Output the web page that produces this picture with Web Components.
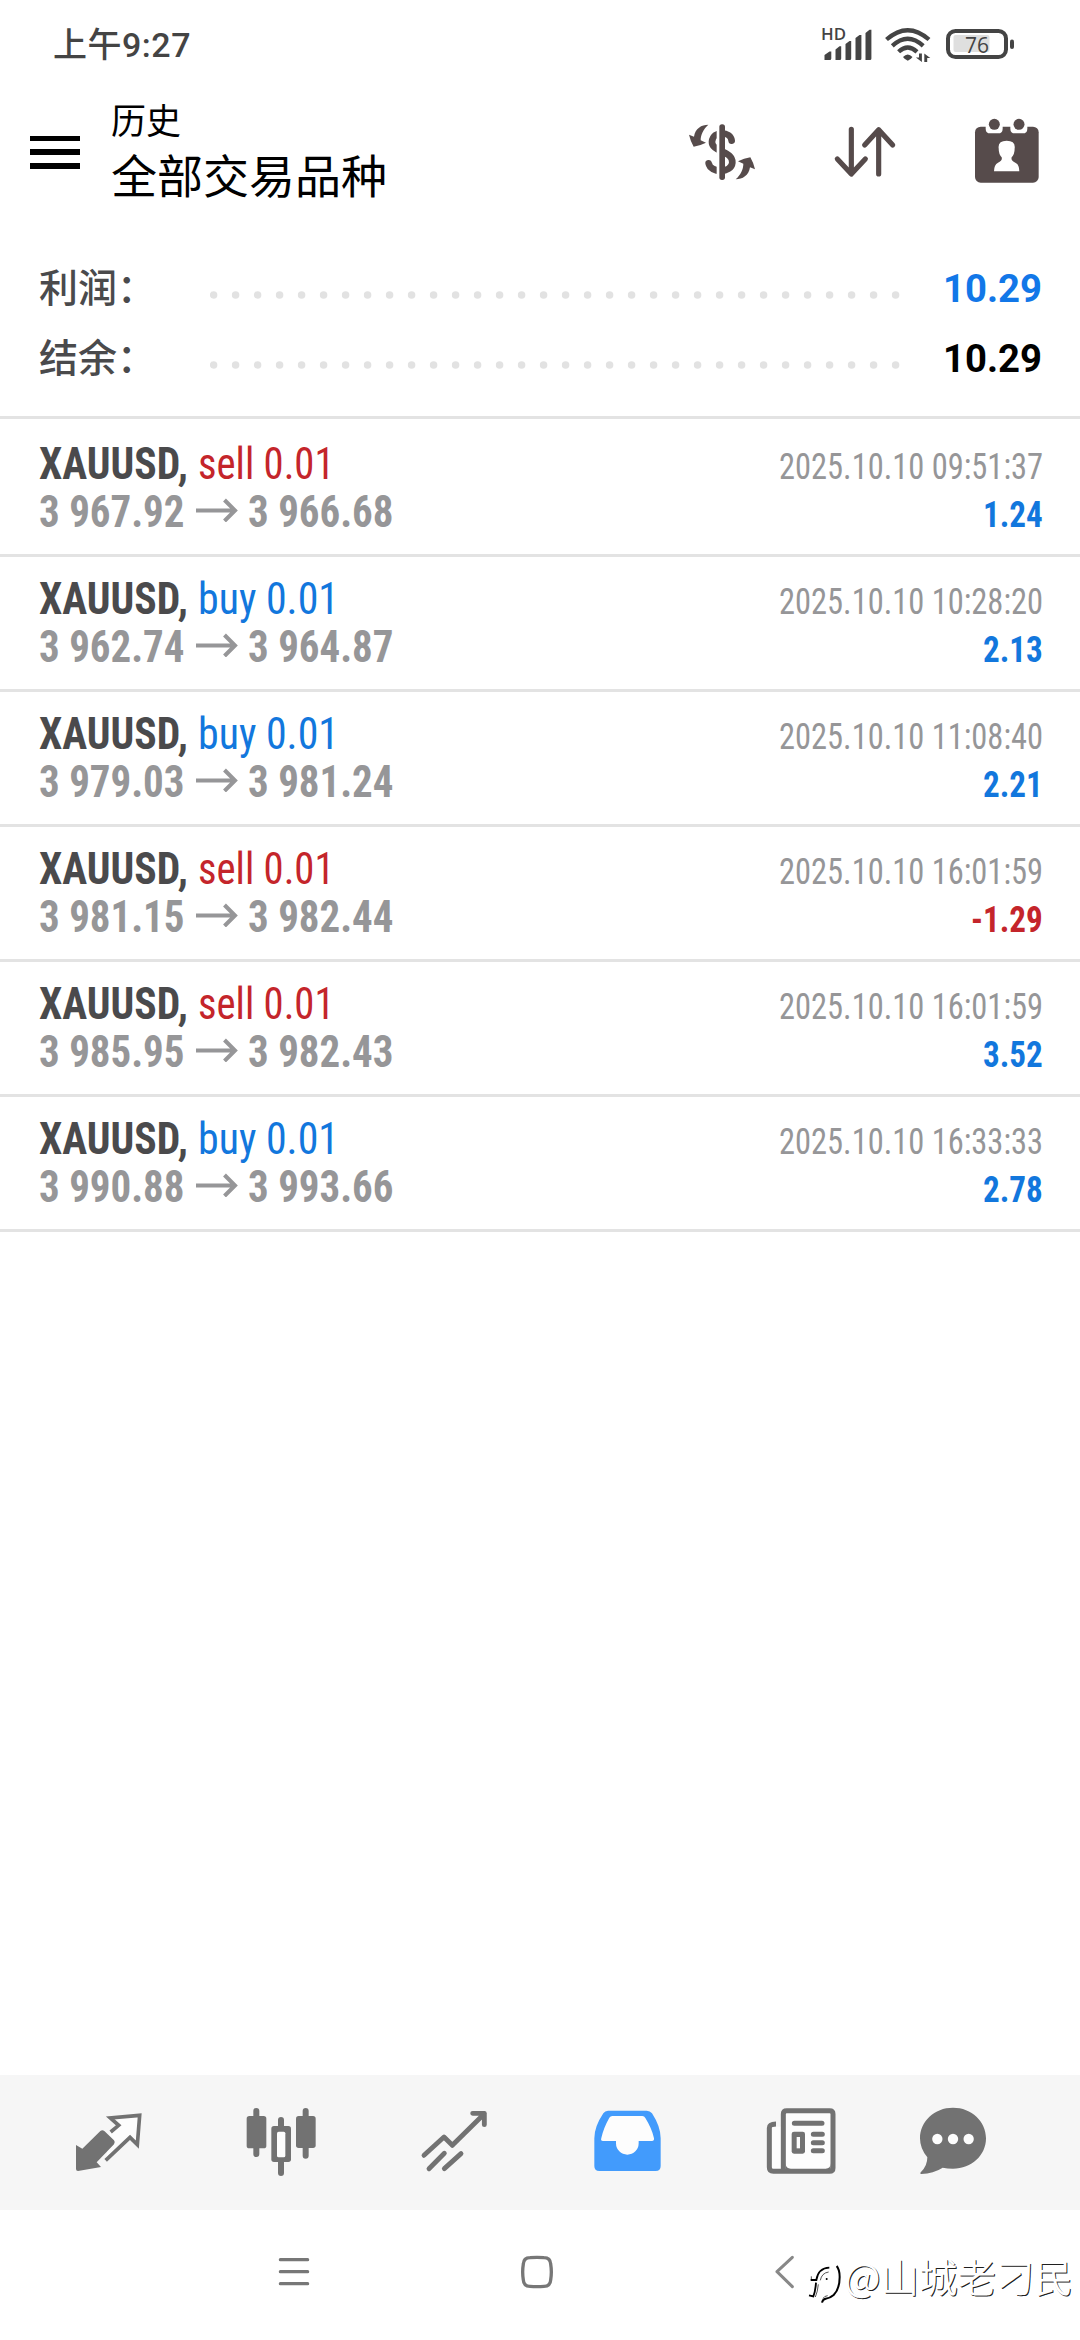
<!DOCTYPE html>
<html lang="zh-CN">
<head>
<meta charset="utf-8">
<title>历史</title>
<style>
body{margin:0;background:#fff}
</style>
</head>
<body>
<history-app></history-app>
<script>
const define=(name,html,after)=>{
  const tpl=document.createElement('template');
  tpl.innerHTML=html;
  customElements.define(name,class extends HTMLElement{
    connectedCallback(){
      if(this.shadowRoot)return;
      this.attachShadow({mode:'open'}).append(tpl.content.cloneNode(true));
      if(after)after.call(this,this.shadowRoot);
    }
  });
};

/* Fits its text to a given advance width: letter spacing to widen, condensing to narrow. */
define('fit-text',`<style>:host{display:inline-block;white-space:pre}span{display:inline-block;transform-origin:0 50%}</style><span><slot></slot></span>`,function(r){
  const s=r.querySelector('span'),n=[...this.textContent].length;
  const natural=s.getBoundingClientRect().width;
  const w=+this.getAttribute('w')||natural*this.getAttribute('ratio');
  if(w>natural)this.style.letterSpacing=(w-natural)/n+'px';
  else s.style.transform=`scaleX(${w/natural})`;
  this.style.width=w+'px';
});

define('status-bar',`<style>
:host{display:flex;justify-content:space-between;height:90px;box-sizing:border-box;padding:25px 64px 0 53px;color:#444}
.time{font:500 34px/40px Roboto,"Noto Sans CJK SC",sans-serif}
svg{margin-top:-25px;display:block}
</style>
<fit-text class="time" w="138">上午9:27</fit-text>
<svg width="200" height="90" viewBox="816 0 200 90" fill="#444">
<text x="821" y="40" font-family="Open Sans,sans-serif" font-weight="600" font-size="16.5" textLength="25" lengthAdjust="spacingAndGlyphs">HD</text>
<path d="M824.500 60v-5l5-3.500h1.800v7q0 1.500-1.500 1.500zM835.500 60v-10.500l4-3.200h1.700v12.200q0 1.500-1.500 1.500zM845.500 60v-16l4-3h1.700v17.500q0 1.500-1.500 1.500zM855.500 60v-22l4-3h1.900v23.500q0 1.500-1.500 1.500zM865.500 60v-27l4-3.300h1.900v28.800q0 1.500-1.500 1.500z"/>
<g fill="none" stroke="#444" stroke-width="4.300"><path d="M886.500 39.500Q907.700 20.800 929 39.500M892.300 45.800Q907.700 31.500 923.200 45.800M898.600 51.800Q907.700 43.200 917 51.800"/></g>
<path d="M903 57q4.700-5 9.500 0-.8 1.800-4.700 3.700-4-1.900-4.800-3.700zM919 53.500h2.900v8.500l-6-4.500h3.100zM924.300 62v-8.500l6 4.500h-3.100v4z"/>
<rect x="948" y="31" width="58" height="26" rx="7.500" fill="#fff" stroke="#444" stroke-width="4"/>
<rect x="953.500" y="35" width="36" height="17" rx="2" fill="#dfdfdf"/>
<text x="965" y="52.700" font-family="Open Sans,sans-serif" font-size="22" textLength="24" lengthAdjust="spacingAndGlyphs">76</text>
<rect x="1010" y="39.500" width="4" height="9.500" rx="2"/>
</svg>`);

define('app-header',`<style>
:host{display:flex;height:150px;box-sizing:border-box;padding-left:30px;color:#000}
.menu{display:flex;flex-direction:column;gap:8px;width:50px;padding-top:45.500px;margin-right:31px}
.menu i{height:5.700px;background:#000}
.titles{flex:1;font-family:"Noto Sans CJK SC",sans-serif;padding-top:9px}
.sub{font-size:35px;line-height:40px}
.title{font-size:46px;line-height:60px;margin-top:4px;white-space:nowrap}
svg{display:block}
</style>
<div class="menu"><i></i><i></i><i></i></div>
<div class="titles"><div class="sub">历史</div><div class="title">全部交易品种</div></div>
<svg width="400" height="100" viewBox="60 270 1200 300" fill="#564b4b">
<path d="M215 422C212 394 160 390 156 425C154 456 219 452 217 488C214 521 152 520 146 490" fill="none" stroke="#564b4b" stroke-width="20" stroke-linecap="round"/>
<rect x="170" y="374" width="17" height="165" fill="#fff"/>
<rect x="178" y="373" width="17" height="167" rx="8"/>
<path d="M145 374C124 374 106 385 102 410L87 404Q92 425 101 440Q120 437 138 428L122 421C122 404 130 388 145 374Z"/>
<path transform="rotate(180 186 456)" d="M145 374C124 374 106 385 102 410L87 404Q92 425 101 440Q120 437 138 428L122 421C122 404 130 388 145 374Z"/>
<path d="M574 388V520M532 477L574 522L616 477M656 522V391M614 435L656 389L698 435" fill="none" stroke="#564b4b" stroke-width="15.500" stroke-linecap="round" stroke-linejoin="round"/>
<rect x="945" y="380" width="191" height="168" rx="17"/>
<path d="M977 372h51v14q0 14-14 14h-23q-14 0-14-14zM1051 372h51v14q0 14-14 14h-23q-14 0-14-14z" fill="#fff"/>
<circle cx="1003" cy="373" r="16.500"/><circle cx="1077" cy="373" r="16.500"/>
<path fill="#fff" d="M1016 445Q1013 422 1040 422Q1067 422 1064 445Q1064 463 1055 472Q1052 482 1066 488Q1078 494 1078 514H1002Q1002 494 1014 488Q1028 482 1025 472Q1016 463 1016 445Z"/>
</svg>`);

define('summary-row',`<style>
:host{display:flex;align-items:center;height:70px;padding:0 38px 0 39px}
.label{font:500 39px/56px "Noto Sans CJK SC",sans-serif;color:#4a4a4c;width:171px;margin-top:-6px}
svg{display:block;margin-top:14px;flex:1}
.val{font:700 39px/56px Roboto,sans-serif;color:var(--value,#000);margin-top:2px}
</style>
<div class="label"><slot name="label"></slot></div>
<svg height="10" viewBox="210 0 733 10" preserveAspectRatio="xMinYMid meet"><path d="M213.600 5H897" stroke="#e2e2e2" stroke-width="7.500" stroke-linecap="round" stroke-dasharray="0 22"/></svg>
<fit-text class="val" w="99">10.29</fit-text>`);

define('trade-row',`<style>
:host{display:block;height:135px;box-sizing:border-box;border-bottom:3px solid #e3e3e3;padding:19px 37px 0 39px;font-family:"Roboto Condensed",Roboto,sans-serif}
.line{display:flex;justify-content:space-between;align-items:baseline;height:48px;font-size:43.500px;line-height:48px;white-space:nowrap}
.sym{font-weight:700;color:#4a4a4c;margin-right:10px}
.side{color:var(--side)}
.price{font-weight:700;color:#969698}
.arrow{margin:0 10px 0 11px;width:42px;height:24px;vertical-align:5px}
.date{font-size:36px;color:#969698}
.amount{font-size:36px;font-weight:700;color:var(--amount)}
</style>
<div class="line"><span><fit-text class="sym" w="149">XAUUSD,</fit-text><fit-text class="side"></fit-text></span><fit-text class="date" w="264"></fit-text></div>
<div class="line"><span><fit-text class="price" id="from" w="146"></fit-text><svg class="arrow" viewBox="0 0 42 24"><path d="M0 12.500H39M28.500 2L39 12.500L28.500 23" fill="none" stroke="#969698" stroke-width="4"/></svg><fit-text class="price" id="to" w="146"></fit-text></span><span class="amount"></span></div>`,function(r){
  const g=k=>this.getAttribute(k),q=s=>r.querySelector(s);
  const set=(s,text,attr,v)=>{const e=q(s),f=document.createElement('fit-text');f.className=e.className;f.setAttribute(attr,v);f.textContent=text;e.replaceWith(f)};
  const sell=g('side')==='sell';
  this.style.setProperty('--side',sell?'#c4252b':'#1277dd');
  this.style.setProperty('--amount',g('amount')[0]==='-'?'#c4252b':'#1277dd');
  set('.side',g('side')+' 0.01','w',sell?136.5:141);
  set('.date',g('date'),'w',264);
  set('#from',g('from'),'w',145.5);
  set('#to',g('to'),'w',145.5);
  set('.amount',g('amount'),'ratio',.92);
});

define('tab-bar',`<style>
:host{display:flex;height:135px;background:#f6f6f6;padding-left:22px;fill:#727272}
svg{display:block;width:173px;height:135px}
.s{fill:none;stroke:#727272;stroke-linecap:round;stroke-linejoin:round}
.w{fill:#fdfdfd}
</style>
<svg viewBox="66 45 519 405"><path class="w" d="M330 218L357 196L326 172L424 161L414 260L390 233L317 302Z"/><path class="s" style="stroke-linejoin:miter;stroke-linecap:butt" stroke-width="11" d="M332 216L356 196L331 174L419 166L412 254L390 232L317 301"/><path d="M228 255L247 266L301 213Q307 208 313 213L342 241Q347 247 342 253L290 307L303 321L234 333Q228 333 228 327Z"/></svg>
<svg viewBox="585 45 519 405"><path class="s" stroke-width="18" d="M769 153V282M917 153V287M843 180V339"/><rect x="740" y="168" width="59" height="97" rx="8"/><rect x="888" y="168" width="59" height="96" rx="8"/><rect x="814" y="198" width="59" height="108" rx="8"/><rect class="w" x="831" y="215" width="25" height="77" rx="5"/></svg>
<svg viewBox="24 45 519 405"><path class="s" stroke-width="14.500" d="M192 286L252 231L277 256L373 161M338 160H373V194M207 326L253 280M253 326L303 281"/></svg>
<svg viewBox="543 45 519 405"><path fill="#429bfc" d="M744 152H860Q870 152 876 160Q902 200 902 235V318Q902 333 887 333H718Q703 333 703 318V235Q703 200 730 160Q735 152 744 152Z"/><path class="w" d="M757 168H847Q853 168 856 174Q876 206 882 235Q883 243 876 243H836V250A34 34 0 0 1 768 250V243H729Q721 243 724 234Q730 205 748 173Q751 168 757 168Z"/></svg>
<svg viewBox="-18 45 519 405"><path class="w" d="M155 200H185V155H340V330H150Z"/><path class="s" stroke-width="15" style="stroke-linecap:butt" d="M168 192Q148 192 148 204V322Q148 334 160 334H329Q339 334 339 324V162Q339 152 329 152H200Q190 152 190 162V334"/><path d="M197 310V328H215Q197 326 197 310ZM332 310V328H314Q332 326 332 310Z"/><path class="s" stroke-width="15" d="M223 190H306M280 223H307M280 248H307M280 272H307"/><rect x="215" y="215" width="40" height="66" rx="7"/><rect class="w" x="230" y="231" width="10" height="34"/></svg>
<svg viewBox="501 45 519 405"><path d="M699 143C755 143 798 184 798 235C798 286 755 326 699 326Q682 326 668 323Q640 341 604 342Q598 341 603 336Q622 318 622 292Q600 266 600 235C600 184 643 143 699 143Z"/><g class="w"><circle cx="652" cy="237" r="15.500"/><circle cx="699" cy="237" r="15.500"/><circle cx="746" cy="237" r="15.500"/></g></svg>`);

define('system-nav',`<style>
:host{display:flex;height:130px;box-sizing:border-box;padding:44px 0 0 277px}
svg{display:block;fill:none;stroke:#777;stroke-linecap:round;stroke-linejoin:round}
</style>
<svg width="34" height="36" viewBox="111 132 102 108"><path d="M121 149H203M121 185H203M121 221H203" stroke-width="9.500"/></svg>
<svg style="margin-left:208px" width="36" height="36" viewBox="837 132 108 108"><path d="M870 143Q891 141 912 143Q931 143 932 162Q936 186 932 210Q931 229 912 229Q891 231 870 229Q851 229 850 210Q846 186 850 162Q851 143 870 143Z" stroke-width="10"/></svg>
<svg style="margin-left:220px" width="24" height="36" viewBox="103 132 72 108"><path d="M155 142L109 185L155 230" stroke="#888" stroke-width="9"/></svg>`);

define('author-mark',`<style>
:host{position:absolute;right:7px;bottom:40px;display:flex;align-items:flex-end;color:#fff}
svg{display:block;margin-bottom:-5px}
span{font:350 38.500px/50px "Noto Sans CJK SC",sans-serif;text-shadow:1px 1px .6px rgba(0,0,0,.9);white-space:nowrap}
</style>
<svg width="38" height="42" viewBox="32 40 114 126" fill="none" stroke="#000"><path d="M43 91H60Q66 55 99 54M59 99Q57 126 51 140L38 137" stroke-width="5.500"/><path d="M45 80L45 91M72 92Q76 70 97 67M66 104Q64 126 57 142M80 146Q84 139 94 138" stroke-width="2"/><path d="M121 49Q130 60 130 82Q130 118 112 136Q102 145 88 147Q79 149 77 159" stroke-width="6"/><circle cx="91" cy="88" r="3" fill="#000" stroke="none"/></svg>
<span>@山城老刁民</span>`);

define('history-app',`<style>
:host{display:flex;flex-direction:column;position:relative;width:1080px;height:2340px;overflow:hidden;background:#fff}
.summary{height:179px;box-sizing:border-box;padding-top:13px;border-bottom:3px solid #e3e3e3;margin-bottom:3px}
.list{flex:1}
</style>
<status-bar></status-bar>
<app-header></app-header>
<section class="summary">
<summary-row style="--value:#1277e8"><span slot="label">利润：</span></summary-row>
<summary-row><span slot="label">结余：</span></summary-row>
</section>
<main class="list">
<trade-row side="sell" date="2025.10.10 09:51:37" from="3 967.92" to="3 966.68" amount="1.24"></trade-row>
<trade-row side="buy" date="2025.10.10 10:28:20" from="3 962.74" to="3 964.87" amount="2.13"></trade-row>
<trade-row side="buy" date="2025.10.10 11:08:40" from="3 979.03" to="3 981.24" amount="2.21"></trade-row>
<trade-row side="sell" date="2025.10.10 16:01:59" from="3 981.15" to="3 982.44" amount="-1.29"></trade-row>
<trade-row side="sell" date="2025.10.10 16:01:59" from="3 985.95" to="3 982.43" amount="3.52"></trade-row>
<trade-row side="buy" date="2025.10.10 16:33:33" from="3 990.88" to="3 993.66" amount="2.78"></trade-row>
</main>
<tab-bar></tab-bar>
<system-nav></system-nav>
<author-mark></author-mark>`);
</script>
</body>
</html>
